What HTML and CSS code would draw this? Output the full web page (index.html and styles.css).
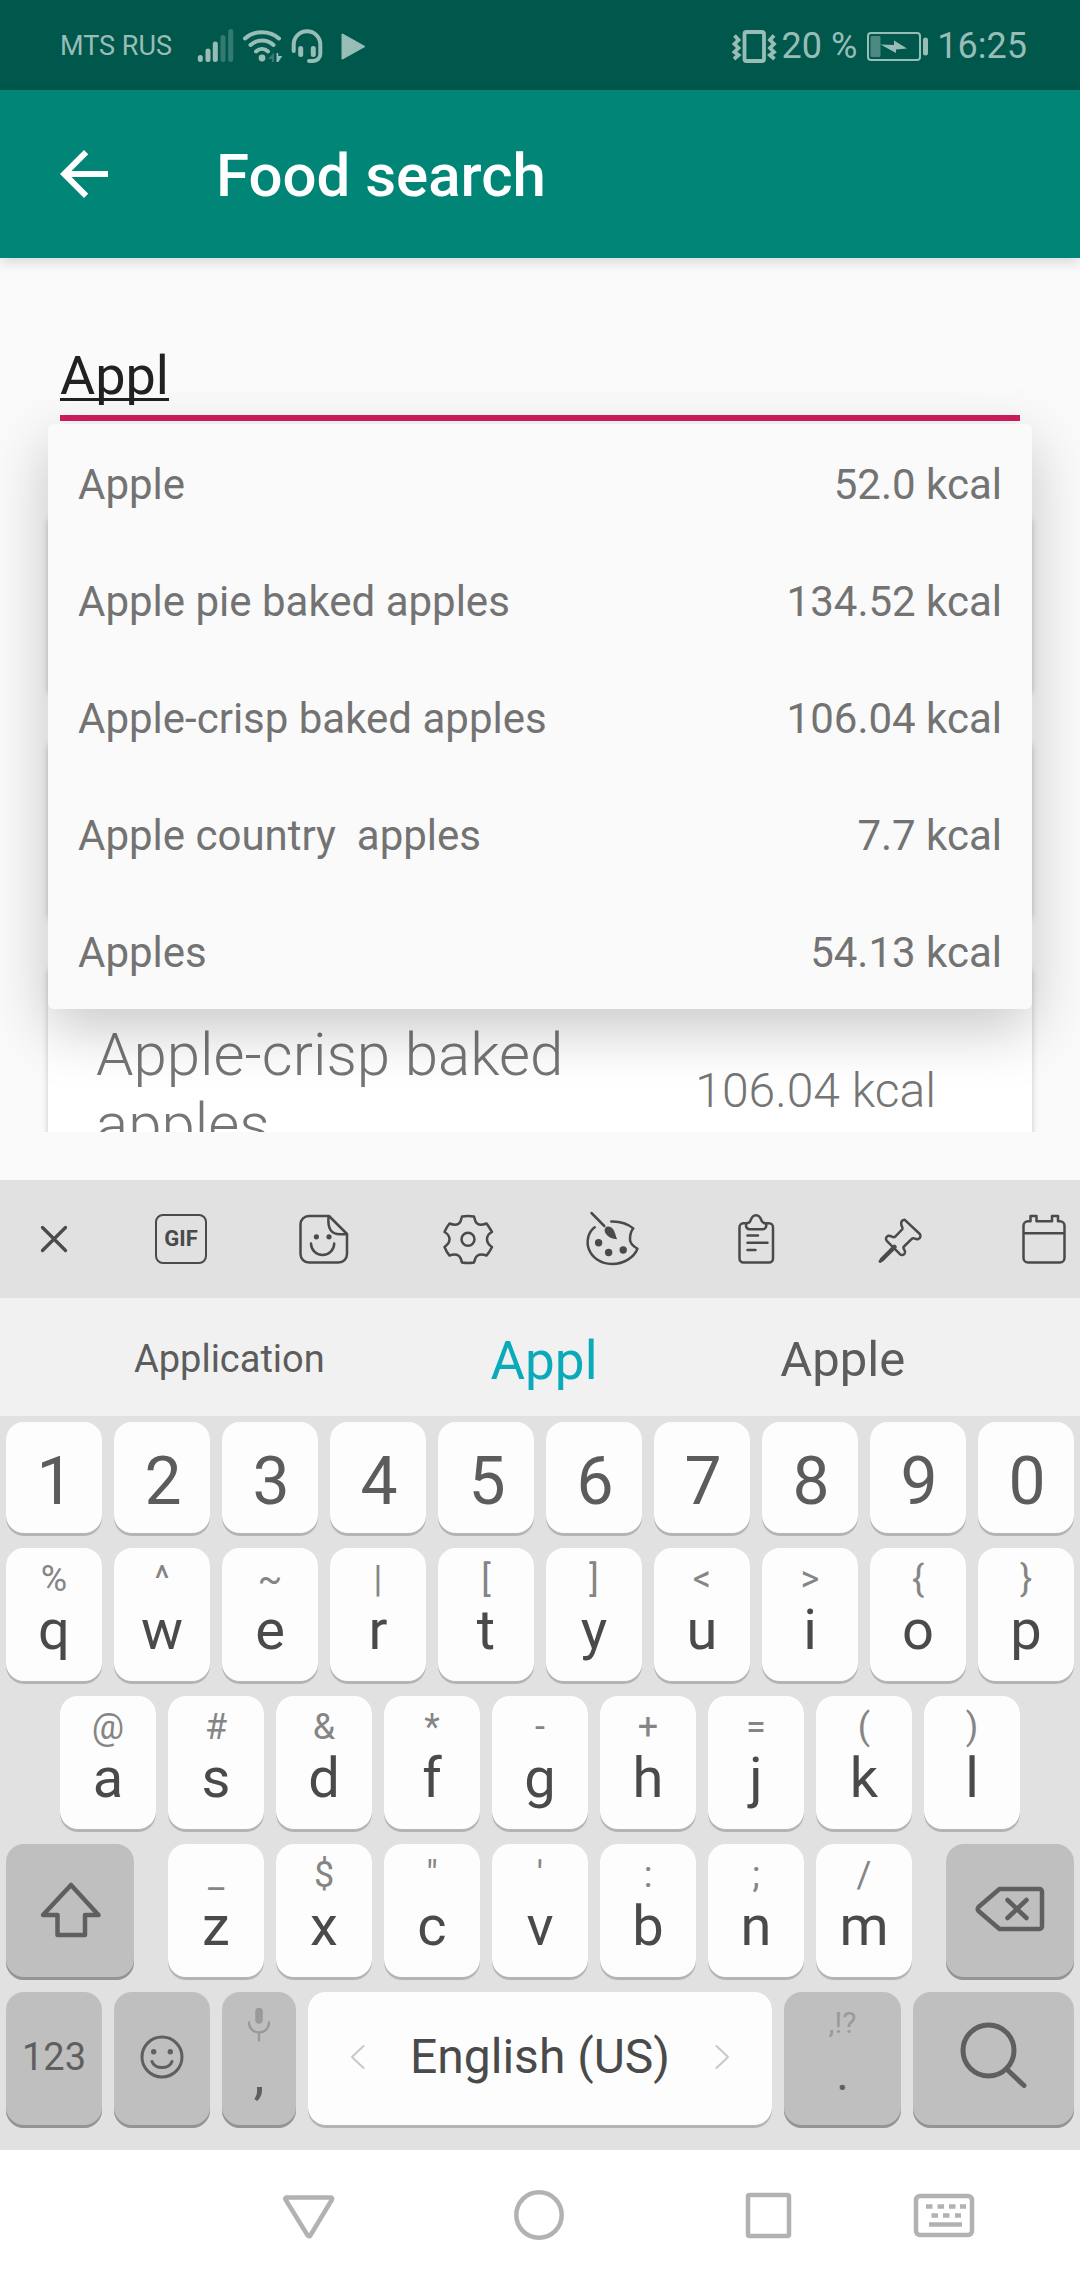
FILE: index.html
```html
<!DOCTYPE html>
<html lang="en">
<head>
<meta charset="utf-8">
<meta name="viewport" content="width=device-width, initial-scale=1">
<title>Food search</title>
<link rel="stylesheet" href="styles.css">
</head>
<body>
<div class="screen">
  <div class="status">
    <span class="carrier">MTS RUS</span>
    <svg class="signal" width="40" height="40" viewBox="0 0 40 40"><g stroke="currentColor" stroke-width="5" stroke-linecap="round"><path d="M4.3 31.5v2M12 25v8.5M19.3 18v15.500"/><path opacity=".35" d="M27 11.500v22M34.700 5.500v28"/></g></svg>
    <svg class="wifi" width="40" height="40" viewBox="0 0 40 40"><g fill="none" stroke="currentColor" stroke-width="4" stroke-linecap="round"><path d="M3 12.500C12 4 28 4 37 12.500M8.500 19C15 13 25 13 31.500 19M14 25.500C17.500 22.300 22.500 22.300 26 25.500"/></g><circle cx="20" cy="32" r="3.400" fill="currentColor"/><path opacity=".35" fill="currentColor" d="M26 33l6-6.500v9.500h-2v-3z"/><path fill="currentColor" d="M34.500 27h1.800v3h4l-4 6h-1.800z"/></svg>
    <svg class="headset" width="34" height="40" viewBox="0 0 34 40"><g fill="none" stroke="currentColor" stroke-linecap="round" stroke-linejoin="round"><path stroke-width="4" d="M3.700 25V18.500a13.200 13.200 0 0 1 26.600 0V28a7 7 0 0 1-7 7H19"/><path stroke-width="5" d="M10.700 22.500v6M23.300 22.500v6"/></g></svg>
    <svg width="28" height="40" viewBox="0 0 28 40"><path fill="currentColor" stroke="currentColor" stroke-width="2" stroke-linejoin="round" d="M2.500 8.500v24L24 20.500z"/></svg>
    <div class="status-right">
      <svg width="48" height="40" viewBox="0 0 48 40"><g fill="none" stroke="currentColor" stroke-width="3.800"><rect x="14.500" y="6" width="19.500" height="29" rx="2"/><path d="M4.500 9.500L8.500 14 4.500 18 8.500 22 4.500 26 8.500 29 4 33M44 9.500L40 14 44 18 40 22 44 26 40 29 44.500 33"/></g></svg>
      <span>20 %</span>
      <svg class="battery" width="66" height="40" viewBox="0 0 66 40"><rect x="3" y="7" width="52" height="27" rx="3" fill="none" stroke="currentColor" stroke-width="2"/><rect x="5.500" y="10" width="10" height="21" rx="1.500" fill="currentColor" opacity=".5"/><path fill="currentColor" d="M15.500 18.500L29 19V14.500L42 22.500 31 23.500V27z"/><path d="M60.500 14v13" stroke="currentColor" stroke-width="5" stroke-linecap="round"/></svg>
      <span>16:25</span>
    </div>
  </div>

  <header class="appbar">
    <button class="back" aria-label="Back"><svg width="72" height="72" viewBox="0 0 24 24"><path fill="currentColor" d="M20 11H7.830l5.590-5.590L12 4l-8 8 8 8 1.410-1.410L7.830 13H20z"/></svg></button>
    <h1>Food search</h1>
  </header>

  <main>
    <div class="field">
      <input class="query" type="text" value="Appl" aria-label="Food name" autocomplete="off">
      <ul class="suggest">
        <li><span>Apple</span><span>52.0 kcal</span></li>
        <li><span>Apple pie baked apples</span><span>134.52 kcal</span></li>
        <li><span>Apple-crisp baked apples</span><span>106.04 kcal</span></li>
        <li><span>Apple country&nbsp; apples</span><span>7.7 kcal</span></li>
        <li><span>Apples</span><span>54.13 kcal</span></li>
      </ul>
    </div>
    <div class="foods">
      <article class="card"></article>
      <article class="card"></article>
      <article class="card"><span class="food">Apple-crisp baked apples</span><span class="kcal">106.04 kcal</span></article>
    </div>
  </main>

  <section class="keyboard">
    <div class="tools">
      <button class="close" aria-label="Close"><svg width="56" height="56" viewBox="0 0 56 56"><path d="M16.500 16.500l23 23M39.500 16.500l-23 23" stroke-width="3.300"/></svg></button>
      <button aria-label="GIF"><span class="gif">GIF</span></button>
      <button aria-label="Stickers"><svg width="56" height="56" viewBox="0 0 56 56"><path d="M33 5H13a8.500 8.500 0 0 0-8.500 8.500V43a8.500 8.500 0 0 0 8.500 8.500H42.500A8.500 8.500 0 0 0 51 43V23zM32.500 5C31.500 18 35 23.500 45 23.200L51 23M15 32.500a11.600 11.600 0 0 0 23.200 0"/><g fill="currentColor" stroke="none"><circle cx="20.400" cy="25.800" r="2.600"/><circle cx="33" cy="25.800" r="2.600"/></g></svg></button>
      <button aria-label="Settings"><svg width="56" height="56" viewBox="0 0 56 56"><path d="M22 5.500Q28 4.500 34 5.500Q34.800 8 35.300 10C37 14 41 14.500 46.500 12.500Q47.500 13.500 52 21C48 23 47 25 47 28.300S48 33.500 52 36Q49 42 46.500 44.500C41 42.500 37 43.500 35.300 47.500L34 51.500Q28 52.500 22 51.500L20.700 47.500C19 43.500 15 42.500 9.500 44.500Q7 42 4.500 36C8 33.500 9.500 31.500 9.500 28.300S8 23 4.500 21Q7 15.500 9.500 12.500C15 14.500 19 14 20.700 10z"/><circle cx="28" cy="28.300" r="6.500"/></svg></button>
      <button aria-label="Themes"><svg width="56" height="56" viewBox="0 0 56 56"><path d="M7.500 2l12.800 13M10.700 16.200C4 21 2 31 5 38.500S16 53 28 53C40 53 50 46.500 53.500 37.800 48 34.500 46 31.500 46 28.500S46.500 20.500 49.300 17.500C44 13 36 10.300 27.300 10.500"/><g fill="currentColor" stroke="none"><path d="M21 17.500C22.500 14.500 27.500 15 30 19.500 31.500 23 32 26 33.200 28.300 28 28 24 26 22 23 20.500 21 20.300 19 21 17.500z"/><circle cx="14.600" cy="31.800" r="3.700"/><circle cx="24.600" cy="41.500" r="3.700"/><circle cx="39.200" cy="39" r="3.700"/></g></svg></button>
      <button aria-label="Clipboard"><svg width="56" height="56" viewBox="0 0 56 56"><path d="M18 12.200H15.500a4 4 0 0 0-4 4V47.500a4 4 0 0 0 4 4H41a4 4 0 0 0 4-4V16.200a4 4 0 0 0-4-4H38M19.500 12Q21.500 12 22.500 9.500C25 2.500 31 2.500 33.500 9.500Q34.500 12 36.500 12 38.500 12.500 38.300 15 37.500 18 35 18.300H21.500Q18.500 18 18 15 18 12.500 19.500 12zM19.500 24.500H30M19.500 31.800H39.500M19.500 38.900H27.500"/></svg></button>
      <button aria-label="Pin"><svg width="56" height="56" viewBox="0 0 56 56"><path d="M32.500 8.700C29.500 9 28.500 11.500 29.500 14.500Q31 17 30.500 18L23 25.800C21 27.500 19.500 24.300 16 24.800 13.500 26 13.500 28.500 15 30.200L28 43.200C30 44.700 32.500 44 33 41.500 33.500 38.500 30 37.500 32 35.500L40 27.700C42 26 43.500 29 46 28.200 48.800 27 49 25 47.800 23z"/><path d="M22.500 36L10 48.500" stroke-width="4.500"/><path d="M12 46l-4 4.500" stroke-width="3"/></svg></button>
      <button aria-label="Calendar"><svg width="56" height="56" viewBox="0 0 56 56"><path d="M20.500 10.200H36M42 10.200h2a4.500 4.500 0 0 1 4.500 4.500V47a4.500 4.500 0 0 1-4.500 4.500H12A4.500 4.500 0 0 1 7.500 47V14.700a4.500 4.500 0 0 1 4.500-4.500h2.500V5h6v5.200M36 10.200V5h6v5.200M7.500 22.300h41"/></svg></button>
    </div>
    <div class="words">
      <button class="long">Application</button>
      <button class="typed">Appl</button>
      <button>Apple</button>
    </div>
    <div class="keys">
      <div class="row digits">
        <button class="key">1</button><button class="key">2</button><button class="key">3</button><button class="key">4</button><button class="key">5</button><button class="key">6</button><button class="key">7</button><button class="key">8</button><button class="key">9</button><button class="key">0</button>
      </div>
      <div class="row">
        <button class="key"><small>%</small>q</button><button class="key"><small>^</small>w</button><button class="key"><small>~</small>e</button><button class="key"><small>|</small>r</button><button class="key"><small>[</small>t</button><button class="key"><small>]</small>y</button><button class="key"><small>&lt;</small>u</button><button class="key"><small>&gt;</small>i</button><button class="key"><small>{</small>o</button><button class="key"><small>}</small>p</button>
      </div>
      <div class="row inset">
        <button class="key"><small>@</small>a</button><button class="key"><small>#</small>s</button><button class="key"><small>&amp;</small>d</button><button class="key"><small>*</small>f</button><button class="key"><small>-</small>g</button><button class="key"><small>+</small>h</button><button class="key"><small>=</small>j</button><button class="key"><small>(</small>k</button><button class="key"><small>)</small>l</button>
      </div>
      <div class="row">
        <button class="key dark mid shift" aria-label="Shift"><svg width="64" height="64" viewBox="0 0 64 64"><path d="M33 8L60.500 38H47V58H19.500V38H5z" stroke-width="4.500"/></svg></button>
        <button class="key"><small>_</small>z</button><button class="key"><small>$</small>x</button><button class="key"><small>"</small>c</button><button class="key"><small>'</small>v</button><button class="key"><small>:</small>b</button><button class="key"><small>;</small>n</button><button class="key"><small>/</small>m</button>
        <button class="key dark mid erase" aria-label="Backspace"><svg width="72" height="64" viewBox="0 0 72 64"><path d="M25.500 12H65.500a2.500 2.500 0 0 1 2.500 2.500V49.500a2.500 2.500 0 0 1-2.500 2.500H25.500L4.500 34Q3 32 4.500 30zM33.500 23l19 18M52.500 23l-19 18" stroke-width="4.500"/></svg></button>
      </div>
      <div class="row">
        <button class="key dark mid mode">123</button>
        <button class="key dark mid" aria-label="Emoji"><svg width="48" height="48" viewBox="0 0 48 48"><circle cx="24" cy="24" r="20" stroke-width="3"/><path d="M14 28.500a10.300 8 0 0 0 20 0" stroke-width="3"/><g fill="currentColor" stroke="none"><circle cx="15.700" cy="18.700" r="2.700"/><circle cx="32.300" cy="18.700" r="2.700"/></g></svg></button>
        <button class="key dark comma" aria-label="Comma, hold for voice input"><small><svg width="36" height="42" viewBox="0 0 36 42"><path d="M18 9.500V18" stroke-width="7.500"/><path d="M8 20.500a10 10 0 0 0 20 0M18 31v7.500" stroke-width="2.300"/></svg></small>,</button>
        <button class="key mid space"><svg width="24" height="32" viewBox="0 0 24 32"><path d="M17.500 5L6 16l11.500 11" stroke-width="2"/></svg><span>English (US)</span><svg width="24" height="32" viewBox="0 0 24 32"><path d="M6.500 5L18 16 6.500 27" stroke-width="2"/></svg></button>
        <button class="key dark dot"><small>,!?</small>.</button>
        <button class="key dark mid search" aria-label="Search"><svg width="72" height="72" viewBox="0 0 72 72"><circle cx="30.500" cy="29.500" r="25.500" stroke-width="5"/><path d="M48.500 48L66 64.500" stroke-width="5"/></svg></button>
      </div>
    </div>
  </section>

  <nav class="nav">
    <button class="nav-back" aria-label="Back"><svg width="56" height="56" viewBox="0 0 56 56"><path d="M5 10.500H50a1.300 1.300 0 0 1 1 2L29.300 48.500a1.500 1.500 0 0 1-2.600 0L4.500 12.500a1.300 1.300 0 0 1 .5-2z"/></svg></button>
    <button aria-label="Home"><svg width="56" height="56" viewBox="0 0 56 56"><circle cx="28" cy="28" r="22.700"/></svg></button>
    <button aria-label="Recent apps"><svg width="56" height="56" viewBox="0 0 56 56"><rect x="7" y="8" width="41" height="41" rx="1.500"/></svg></button>
    <button class="nav-kbd" aria-label="Change keyboard"><svg width="64" height="56" viewBox="0 0 64 56"><rect x="4" y="9" width="56" height="39" rx="4"/><path stroke-linecap="butt" d="M14 19.500h6.500M25.500 19.500H32M37 19.500h6.500M48 19.500h6M19.500 28.500H26M31 28.500h6.500M43 28.500h6M17 37.500h33" stroke-width="4.400"/></svg></button>
  </nav>
</div>
</body>
</html>
```
FILE: styles.css
```css
* {
  box-sizing: border-box;
}

body {
  margin: 0;
  font-family: Roboto, "Noto Sans", sans-serif;
}

button {
  border: 0;
  margin: 0;
  padding: 0;
  background: none;
  color: inherit;
  font: inherit;
}

svg {
  display: block;
  flex: none;
}

.screen {
  display: flex;
  flex-direction: column;
  height: 100vh;
  overflow: hidden;
  background: #fafafa;
}

/* Status bar */
.status {
  display: flex;
  align-items: center;
  height: 90px;
  padding: 2px 53px 0 60px;
  background: #00574b;
  color: #98bdb7;
  font-size: 36px;
}

.carrier {
  font-size: 27px;
}

.signal {
  margin-left: 24px;
}

.wifi {
  margin-left: 6px;
}

.headset {
  margin: 0 16px 0 8px;
}

.status-right {
  display: flex;
  align-items: center;
  gap: 4px;
  margin-left: auto;
}

.battery {
  margin: 0 2px 0 4px;
}

/* App bar */
.appbar {
  display: flex;
  align-items: center;
  gap: 96px;
  height: 168px;
  padding: 0 48px;
  background: #008577;
  color: #fff;
  box-shadow: 0 4px 12px rgba(0, 0, 0, 0.14);
}

.appbar h1 {
  margin: 0;
  padding-top: 3px;
  font-size: 60px;
  font-weight: 500;
}

/* Search field and its drop-down */
main {
  display: flex;
  flex: 1;
  flex-direction: column;
  min-height: 0;
  padding: 86px 0 48px;
}

.field {
  position: relative;
  z-index: 1;
  margin: 0 60px;
}

.query {
  display: block;
  width: 100%;
  height: 77px;
  padding: 0 0 9px;
  border: 0;
  border-bottom: 6px solid #d01c5e;
  border-radius: 0;
  outline: 0;
  background: none;
  color: #212121;
  font: 54px/62px Roboto, "Noto Sans", sans-serif;
  text-decoration: underline 3px;
  text-decoration-skip-ink: none;
  text-underline-offset: 4px;
}

.suggest {
  position: absolute;
  top: 80px;
  right: -12px;
  left: -12px;
  margin: 0;
  padding: 0;
  border-radius: 6px;
  background: #fafafa;
  box-shadow: 0 20px 60px rgba(0, 0, 0, 0.22);
  color: #737373;
  font-size: 42px;
  list-style: none;
}

.suggest li {
  display: flex;
  align-items: center;
  justify-content: space-between;
  height: 117px;
  padding: 4px 30px 0;
}

/* Food cards */
.foods {
  display: flex;
  flex: 1;
  flex-direction: column;
  gap: 48px;
  min-height: 0;
  margin-top: 47px;
  padding: 48px 48px 0;
  overflow: hidden;
}

.card {
  display: flex;
  flex: none;
  align-items: center;
  justify-content: space-between;
  gap: 24px;
  min-height: 177px;
  padding: 54px 96px 54px 48px;
  border-radius: 6px;
  background: #fff;
  box-shadow: 0 2px 6px rgba(0, 0, 0, 0.22);
  color: #757575;
  font-weight: 300;
}

.food {
  font-size: 60px;
  line-height: 70px;
}

.kcal {
  font-size: 48px;
  white-space: nowrap;
}

/* Keyboard */
.keyboard {
  position: relative;
  z-index: 1;
  background: #e1e1e1;
  color: #4a4a4a;
}

.keyboard svg {
  fill: none;
  stroke: currentColor;
  stroke-width: 2.5px;
  stroke-linecap: round;
  stroke-linejoin: round;
}

.tools {
  display: flex;
  height: 118px;
  overflow: hidden;
}

.tools button {
  display: flex;
  flex: none;
  align-items: center;
  justify-content: center;
  width: 144px;
}

.tools .close {
  width: 108px;
}

.gif {
  width: 52px;
  margin-left: 2px;
  border: 2px solid;
  border-radius: 8px;
  font-size: 22px;
  font-weight: 700;
  line-height: 46px;
  text-align: center;
}

.words {
  display: flex;
  height: 118px;
  padding: 4px 96px 0 72px;
  background: #f1f1f1;
  color: #5c5c5c;
  font-size: 49px;
}

.words button {
  flex: 282 1 0;
}

.words .long {
  flex-grow: 314;
  font-size: 38px;
}

.words .typed {
  flex-grow: 314;
  padding-top: 4px;
  color: #0aaabb;
  font-size: 53px;
}

.keys {
  display: flex;
  flex-direction: column;
  gap: 12px;
  padding: 6px 6px 22px;
}

.row {
  display: flex;
  gap: 12px;
}

.inset {
  padding: 0 54px;
}

.key {
  display: flex;
  flex: 96 1 0;
  flex-direction: column;
  align-items: center;
  min-width: 0;
  height: 136px;
  padding-top: 10px;
  border-radius: 18px;
  background: #fdfdfd;
  box-shadow: inset 0 -3px #b4b4b4;
  font-size: 56px;
  line-height: 60px;
}

.key small {
  height: 42px;
  color: #858585;
  font-size: 36px;
  line-height: 42px;
}

.digits .key {
  justify-content: center;
  height: 114px;
  padding: 6px 0 0 2px;
  color: #5c5c5c;
  font-size: 66px;
}

.dark {
  background: #bfbfbf;
  box-shadow: inset 0 -3px #949494;
  color: #5f5f5f;
}

.dark small {
  color: #9a9a9a;
  font-size: 30px;
}

.mid {
  justify-content: center;
  padding: 0 0 6px;
}

.shift {
  flex-grow: 128;
  margin-right: 22px;
}

.erase {
  flex-grow: 128;
  margin-left: 22px;
}

.mode {
  font-size: 38px;
}

.comma {
  flex-grow: 74;
}

.space {
  flex-direction: row;
  flex-grow: 464;
  align-items: center;
  gap: 40px;
  font-size: 48px;
}

.space svg {
  color: #c8c8c8;
}

.dot {
  flex-grow: 117;
  font-size: 48px;
}

.search {
  flex-grow: 161;
}

/* System navigation */
.nav {
  position: relative;
  z-index: 1;
  display: flex;
  height: 130px;
  padding: 0 7% 0 18%;
  background: #fff;
  color: #b2b2b2;
}

.nav button {
  display: flex;
  flex: 230 1 0;
  align-items: center;
  justify-content: center;
}

.nav .nav-kbd {
  flex-grow: 120;
}

.nav svg {
  fill: none;
  stroke: currentColor;
  stroke-width: 4.5px;
  stroke-linejoin: round;
}
```
